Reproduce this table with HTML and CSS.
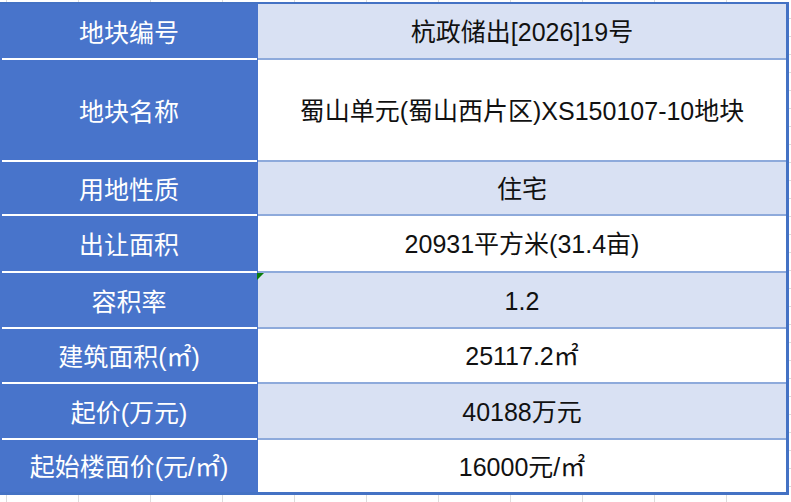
FILE: index.html
```html
<!DOCTYPE html>
<html lang="zh-CN">
<head>
<meta charset="utf-8">
<title>地块信息</title>
<link rel="stylesheet" href="styles.css">
</head>
<body>
<div class="wrap">
  <div class="sheet">
    <div class="cell key r1">地块编号</div>
    <div class="cell val alt r1">杭政储出[2026]19号</div>
    <div class="cell key r2">地块名称</div>
    <div class="cell val r2">蜀山单元(蜀山西片区)XS150107-10地块</div>
    <div class="cell key r3">用地性质</div>
    <div class="cell val alt r3">住宅</div>
    <div class="cell key r4">出让面积</div>
    <div class="cell val r4">20931平方米(31.4亩)</div>
    <div class="cell key r5">容积率</div>
    <div class="cell val alt r5 flagged"><span class="flag"></span>1.2</div>
    <div class="cell key r6">建筑面积(㎡)</div>
    <div class="cell val r6">25117.2㎡</div>
    <div class="cell key r7">起价(万元)</div>
    <div class="cell val alt r7">40188万元</div>
    <div class="cell key r8 last">起始楼面价(元/㎡)</div>
    <div class="cell val r8 last">16000元/㎡</div>
  </div>
  <div class="gutter"></div>
</div>
</body>
</html>
```

FILE: styles.css
```css
html, body {
  margin: 0;
  padding: 0;
}
body {
  width: 791px;
  height: 502px;
  overflow: hidden;
  background-color: #ffffff;
  background-image: repeating-linear-gradient(90deg, transparent 0, transparent 6px, #dcdcdc 6px, #dcdcdc 7px, transparent 7px, transparent 72px);
  font-family: "Liberation Sans", "Noto Sans CJK SC", sans-serif;
}
.wrap {
  display: flex;
  padding-top: 2px;
}
.sheet {
  display: grid;
  grid-template-columns: 258px 528px;
  grid-template-rows: 56px 102px 54px 57px 56px 55px 56px 52px;
  border-top: 2px solid #4472c4;
  border-right: 3px solid #4472c4;
  border-bottom: 3px solid #4472c4;
  background: #ffffff;
}
.gutter {
  flex: 1;
  height: 493px;
  background-image: repeating-linear-gradient(180deg, transparent 0, transparent 16px, #dcdcdc 16px, #dcdcdc 17px, transparent 17px, transparent 18px);
}
.cell {
  display: flex;
  align-items: center;
  justify-content: center;
  font-size: 25px;
  line-height: 1;
  white-space: nowrap;
  box-sizing: border-box;
}
.key {
  background-color: #4874cb;
  color: #ffffff;
  background-image: linear-gradient(#ffffff, #ffffff);
  background-repeat: no-repeat;
  background-size: 255px 2px;
  background-position: 2px 100%;
  padding-top: 2px;
}
.val {
  color: #111111;
  background-color: #ffffff;
  border-bottom: 2px solid #8eaadb;
  padding-top: 2px;
}
.val.alt {
  background-color: #d9e1f3;
}
.key.last {
  background-image: none;
}
.val.last {
  border-bottom: none;
}
.flagged {
  position: relative;
}
.flag {
  position: absolute;
  left: -1px;
  top: 0;
  width: 0;
  height: 0;
  border-top: 7px solid #0a7d0a;
  border-right: 7px solid transparent;
}
```
